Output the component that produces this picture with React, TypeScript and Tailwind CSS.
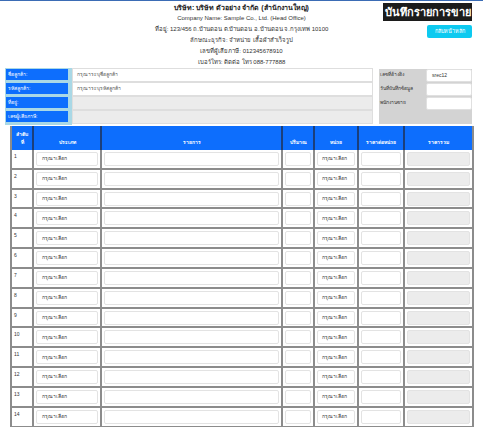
import React from "react";

const cols = "grid grid-cols-[22px_68px_181px_32px_44px_46px_69px]";

function Row({ n }: { n: number }) {
  const cell = "border-r-2 border-b-2 border-[#8c8c8c] h-[19.83px] box-border";
  const inp = "h-[14px] rounded-[2px] border border-[#e3e3e3] bg-white box-border";
  return (
    <div className={cols}>
      <div className={`${cell} pl-[2px] pt-[3px] text-[5px] text-[#333]`}>{n}</div>
      <div className={`${cell} px-[2px] pt-[2px]`}>
        <div className={`${inp} flex items-center pl-[5px] text-[5px] text-[#333]`}>กรุณาเลือก</div>
      </div>
      <div className={`${cell} px-[2px] pt-[2px]`}>
        <div className={inp} />
      </div>
      <div className={`${cell} px-[2px] pt-[2px]`}>
        <div className={inp} />
      </div>
      <div className={`${cell} px-[2px] pt-[2px]`}>
        <div className={`${inp} flex items-center pl-[4px] text-[5px] text-[#333]`}>กรุณาเลือก</div>
      </div>
      <div className={`${cell} px-[2px] pt-[2px]`}>
        <div className={inp} />
      </div>
      <div className={`${cell} px-[2px] pt-[2px]`}>
        <div className={`${inp} !bg-[#ececec]`} />
      </div>
    </div>
  );
}

export default function App() {
  const font = { fontFamily: '"Liberation Sans", "Noto Sans", "DejaVu Sans", sans-serif' };
  const labels = ["ชื่อลูกค้า:", "รหัสลูกค้า:", "ที่อยู่:", "เลขผู้เสียภาษี:"];
  const th = "border-r-2 border-[#1b3f7a] bg-[#0d6efd] text-white font-bold text-[5px] flex items-end justify-center pb-[4px] text-center leading-[8px]";
  return (
    <div className="w-[483px] bg-white text-[#222]" style={font}>
      <div className="h-px bg-[#3b6cb5]" />
      <div className="grid grid-cols-[1fr_auto_1fr] h-[67px]">
        <div />
        <div className="flex flex-col items-center pt-[1px] text-[6px] leading-[11px] text-[#333]">
          <div className="font-bold text-[7px] text-[#222]">บริษัท: บริษัท ตัวอย่าง จำกัด (สำนักงานใหญ่)</div>
          <div>Company Name: Sample Co., Ltd. (Head Office)</div>
          <div>ที่อยู่: 123/456 ถ.บ้านดอน ต.บ้านดอน อ.บ้านดอน จ.กรุงเทพ 10100</div>
          <div>ลักษณะธุรกิจ: จำหน่าย เสื้อผ้าสำเร็จรูป</div>
          <div>เลขที่ผู้เสียภาษี: 012345678910</div>
          <div>เบอร์โทร: ติดต่อ โทร 088-777888</div>
        </div>
        <div className="flex flex-col items-end pr-[11px] pt-[2px]">
          <div className="bg-[#1c1c1c] text-white font-bold text-[11px] leading-[18px] h-[18px] w-[89px] whitespace-nowrap flex items-center justify-center">บันทึกรายการขาย</div>
          <div className="mt-[4px] bg-[#0dcaf0] text-white text-[5.5px] h-[13px] w-[45px] rounded-[2px] flex items-center justify-center">กลับหน้าหลัก</div>
        </div>
      </div>

      <div className="flex pl-[5px] pr-[11px] h-[57px]">
        <div className="w-[67px] bg-[#a9d8e6] pl-px pr-[4px] pt-[1px] pb-[2px] flex flex-col gap-[3px]">
          {labels.map((l) => (
            <div key={l} className="h-[11px] bg-[#0d6efd] text-white text-[5px] pl-[2px] flex items-center">{l}</div>
          ))}
        </div>
        <div className="w-[301px] flex flex-col">
          <div className="h-[14px] border border-[#dedede] bg-white text-[5px] text-[#555] pl-[4px] flex items-center">กรุณาระบุชื่อลูกค้า</div>
          <div className="h-[14px] border border-[#dedede] bg-white text-[5px] text-[#555] pl-[4px] flex items-center">กรุณาระบุรหัสลูกค้า</div>
          <div className="h-[14px] border border-[#dedede] bg-[#ececec]" />
          <div className="h-[14px] border border-[#dedede] bg-[#ececec]" />
        </div>
        <div className="w-[6px]" />
        <div className="flex-1 bg-[#d3d3d3] mt-[1px] mb-[1px] flex flex-col gap-[1px]">
          {[
            ["เลขที่อ้างอิง", "srec12"],
            ["วันที่บันทึกข้อมูล", ""],
            ["พนักงานขาย", ""],
          ].map(([l, v]) => (
            <div key={l} className="flex h-[13px]">
              <div className="w-[47px] text-[5px] text-[#333] pl-px pt-[2px] whitespace-nowrap">{l}</div>
              <div className="flex-1 bg-white rounded-[2px] border border-[#e0e0e0] text-[5px] text-[#333] pl-[5px] flex items-center">{v}</div>
            </div>
          ))}
        </div>
      </div>

      <div className="mt-px ml-[10px] w-[462px] border-l-2 border-[#8c8c8c]">
        <div className={`${cols} h-[24px]`}>
          <div className={th}>ลำดับ<br />ที่</div>
          <div className={th}>ประเภท</div>
          <div className={th}>รายการ</div>
          <div className={th}>ปริมาณ</div>
          <div className={th}>หน่วย</div>
          <div className={th}>ราคาต่อหน่วย</div>
          <div className={`${th} border-r-[#8c8c8c]`}>ราคารวม</div>
        </div>
        {Array.from({ length: 14 }, (_, i) => (
          <Row key={i} n={i + 1} />
        ))}
      </div>
    </div>
  );
}
